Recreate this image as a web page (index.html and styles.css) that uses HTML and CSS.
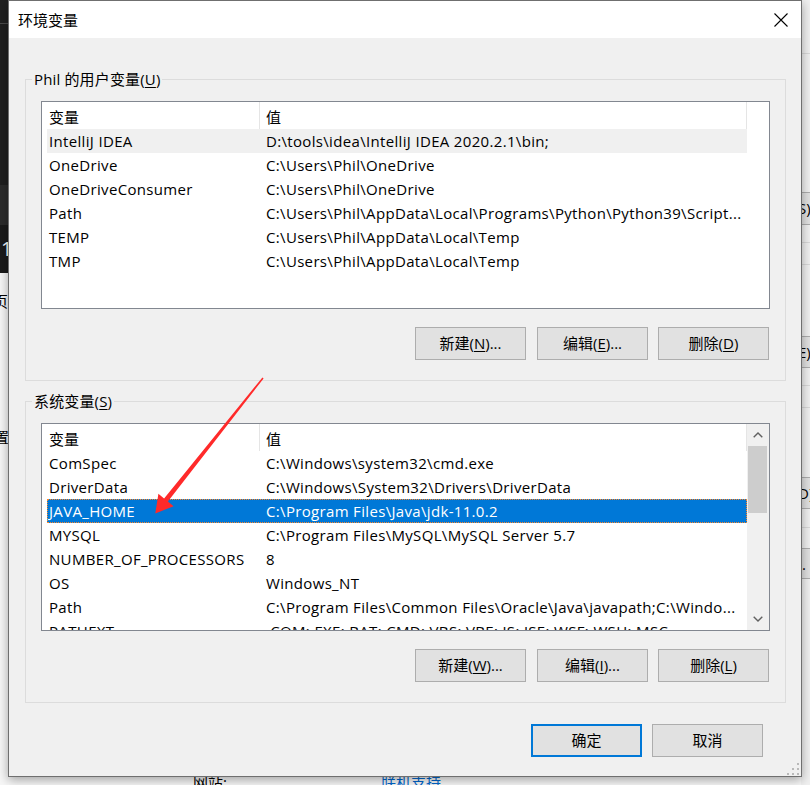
FILE: index.html
```html
<!DOCTYPE html>
<html lang="zh-CN">
<head>
<meta charset="utf-8">
<title>环境变量</title>
<link rel="stylesheet" href="styles.css">
</head>
<body>
<div class="desktop">
  <div class="bg-left">
    <div class="bl-a"></div>
    <div class="bl-line"></div>
    <div class="bl-b"></div>
    <div class="bl-c"></div>
    <div class="bl-d"><span class="bl-digit">1</span></div>
    <div class="bl-e">
      <span class="bl-g1">页</span>
      <span class="bl-g2">置</span>
    </div>
  </div>

  <div class="bg-right">
    <div class="br-line br-l1"></div>
    <div class="br-btn br-b1">S)</div>
    <div class="br-line br-l2"></div>
    <div class="br-line br-l3"></div>
    <div class="br-btn br-b2">E)</div>
    <div class="br-line br-l4"></div>
    <div class="br-line br-l5"></div>
    <div class="br-btn br-b3">D)</div>
    <div class="br-line br-l6"></div>
    <div class="br-btn br-b4">..</div>
  </div>

  <div class="bg-bottom">
    <span class="bb-label">网站:</span>
    <span class="bb-link">联机支持</span>
  </div>

  <div class="dialog">
    <div class="titlebar">
      <span class="title">环境变量</span>
      <svg class="close" width="14" height="14" viewBox="0 0 14 14">
        <path d="M0.5 0.5 L13.5 13.5 M13.5 0.5 L0.5 13.5" stroke="#000" stroke-width="1.1" fill="none"/>
      </svg>
    </div>

    <div class="body">
      <div class="group group-user">
        <div class="group-title">Phil 的用户变量(<u>U</u>)</div>
        <div class="list">
          <div class="table">
            <div class="hdr"><div class="c1">变量</div><div class="c2">值</div></div>
            <div class="row hot"><div class="c1">IntelliJ IDEA</div><div class="c2">D:\tools\idea\IntelliJ IDEA 2020.2.1\bin;</div></div>
            <div class="row"><div class="c1">OneDrive</div><div class="c2">C:\Users\Phil\OneDrive</div></div>
            <div class="row"><div class="c1">OneDriveConsumer</div><div class="c2">C:\Users\Phil\OneDrive</div></div>
            <div class="row"><div class="c1">Path</div><div class="c2">C:\Users\Phil\AppData\Local\Programs\Python\Python39\Script...</div></div>
            <div class="row"><div class="c1">TEMP</div><div class="c2">C:\Users\Phil\AppData\Local\Temp</div></div>
            <div class="row"><div class="c1">TMP</div><div class="c2">C:\Users\Phil\AppData\Local\Temp</div></div>
          </div>
        </div>
        <div class="btns">
          <button class="btn">新建(<u>N</u>)...</button>
          <button class="btn">编辑(<u>E</u>)...</button>
          <button class="btn">删除(<u>D</u>)</button>
        </div>
      </div>

      <div class="group group-sys">
        <div class="group-title">系统变量(<u>S</u>)</div>
        <div class="list">
          <div class="table">
            <div class="hdr"><div class="c1">变量</div><div class="c2">值</div></div>
            <div class="row"><div class="c1">ComSpec</div><div class="c2">C:\Windows\system32\cmd.exe</div></div>
            <div class="row"><div class="c1">DriverData</div><div class="c2">C:\Windows\System32\Drivers\DriverData</div></div>
            <div class="row sel"><div class="c1">JAVA_HOME</div><div class="c2">C:\Program Files\Java\jdk-11.0.2</div></div>
            <div class="row"><div class="c1">MYSQL</div><div class="c2">C:\Program Files\MySQL\MySQL Server 5.7</div></div>
            <div class="row"><div class="c1">NUMBER_OF_PROCESSORS</div><div class="c2">8</div></div>
            <div class="row"><div class="c1">OS</div><div class="c2">Windows_NT</div></div>
            <div class="row"><div class="c1">Path</div><div class="c2">C:\Program Files\Common Files\Oracle\Java\javapath;C:\Windo...</div></div>
            <div class="row"><div class="c1">PATHEXT</div><div class="c2">.COM;.EXE;.BAT;.CMD;.VBS;.VBE;.JS;.JSE;.WSF;.WSH;.MSC</div></div>
          </div>
          <div class="scroll">
            <div class="sb-btn">
              <svg width="10" height="6" viewBox="0 0 10 6"><path d="M0.7 5.3 L5 1 L9.3 5.3" stroke="#606060" stroke-width="1.4" fill="none"/></svg>
            </div>
            <div class="thumb"></div>
            <div class="sb-track"></div>
            <div class="sb-btn">
              <svg width="10" height="6" viewBox="0 0 10 6"><path d="M0.7 0.7 L5 5 L9.3 0.7" stroke="#606060" stroke-width="1.4" fill="none"/></svg>
            </div>
          </div>
        </div>
        <div class="btns">
          <button class="btn">新建(<u>W</u>)...</button>
          <button class="btn">编辑(<u>I</u>)...</button>
          <button class="btn">删除(<u>L</u>)</button>
        </div>
      </div>

      <div class="footer">
        <button class="btn btn-default">确定</button>
        <button class="btn">取消</button>
      </div>
    </div>

    <svg class="grip" width="12" height="12" viewBox="0 0 12 12">
      <rect x="10" y="0" width="2" height="2" fill="#b9b9b9"/>
      <rect x="5" y="5" width="2" height="2" fill="#b9b9b9"/>
      <rect x="10" y="5" width="2" height="2" fill="#b9b9b9"/>
      <rect x="0" y="10" width="2" height="2" fill="#b9b9b9"/>
      <rect x="5" y="10" width="2" height="2" fill="#b9b9b9"/>
      <rect x="10" y="10" width="2" height="2" fill="#b9b9b9"/>
    </svg>
  </div>

  <svg class="arrow" width="810" height="785" viewBox="0 0 810 785">
    <polygon points="263.6,378.5 167.9,501.6 173.6,506.2 155.3,513.4 158.4,493.8 164.1,498.4 262.4,377.5" fill="#ff2a2a"/>
  </svg>
</div>
</body>
</html>
```

FILE: styles.css
```css
* { box-sizing: border-box; }
html, body { margin: 0; padding: 0; }
body {
  width: 810px;
  height: 785px;
  overflow: hidden;
  font-family: "Open Sans", "Noto Sans CJK SC", sans-serif;
  font-size: 15px;
  color: #000;
}
.desktop {
  position: relative;
  width: 810px;
  height: 785px;
  background: #f8f8f8;
  overflow: hidden;
}

/* ---------- background window fragments ---------- */
.bg-left {
  position: absolute;
  left: 0;
  top: 0;
  width: 8px;
  height: 785px;
  display: flex;
  flex-direction: column;
  overflow: hidden;
}
.bl-a { height: 23px; background: #202020; }
.bl-line { height: 1px; background: #4a4a4a; }
.bl-b { height: 161px; background: #1f1f1f; }
.bl-c { height: 40px; background: #2b2b2b; }
.bl-d { height: 48px; background: #1a1a1a; color: #fff; font-size: 20px; line-height: 24px; padding: 12px 0 0 1px; }
.bl-e { flex: 1; background: #f7f7f7; display: flex; flex-direction: column; font-size: 15px; line-height: 20px; }
.bl-g1 { margin: 18px 0 0 -7px; white-space: nowrap; }
.bl-g2 { margin: 116px 0 0 -6px; white-space: nowrap; }

.bg-right {
  position: absolute;
  left: 801px;
  top: 0;
  width: 9px;
  height: 785px;
  background: #f0f0f0;
  overflow: hidden;
}
.br-line { position: absolute; left: 0; width: 9px; height: 1px; background: #d9d9d9; }
.br-btn {
  position: absolute;
  left: 0;
  width: 9px;
  background: #e1e1e1;
  border-top: 1px solid #adadad;
  border-bottom: 1px solid #adadad;
  font-size: 15px;
  line-height: 30px;
  text-indent: -3px;
  white-space: nowrap;
  color: #000;
}
.br-l1 { top: 53px; }
.br-b1 { top: 192px; height: 33px; }
.br-l2 { top: 242px; }
.br-l3 { top: 264px; }
.br-b2 { top: 336px; height: 32px; }
.br-l4 { top: 385px; }
.br-l5 { top: 407px; }
.br-b3 { top: 477px; height: 32px; }
.br-l6 { top: 527px; }
.br-b4 { top: 548px; height: 31px; }

.bg-bottom {
  position: absolute;
  left: 193px;
  top: 772px;
  display: flex;
  gap: 154px;
  line-height: 20px;
  font-size: 15px;
  white-space: nowrap;
}
.bb-link { color: #0066cc; }

/* ---------- dialog ---------- */
.dialog {
  position: absolute;
  left: 8px;
  top: 0;
  width: 794px;
  height: 777px;
  background: #f0f0f0;
  border: 1px solid #6f6f6f;
  box-shadow: 0 3px 10px rgba(0, 0, 0, 0.35);
  display: flex;
  flex-direction: column;
}
.titlebar {
  height: 37px;
  flex: none;
  background: #fff;
  display: flex;
  align-items: center;
  justify-content: space-between;
  padding-left: 9px;
  padding-right: 13px;
}
.title { font-size: 15px; line-height: 20px; padding-top: 1px; }
.close { display: block; }

.body {
  padding: 41px 15px 0 16px;
  display: flex;
  flex-direction: column;
}

.group {
  border: 1px solid #dcdcdc;
  padding: 0 15px 20px 15px;
}
.group-sys { margin-top: 20px; }
.group-title {
  width: fit-content;
  margin: -11px 0 0 -9px;
  padding: 0 2px;
  background: #f0f0f0;
  line-height: 20px;
  height: 20px;
  white-space: nowrap;
  letter-spacing: 0.15px;
}
u { text-underline-offset: 2px; }

.list {
  margin-top: 12px;
  height: 208px;
  border: 1px solid #828790;
  background: #fff;
  display: flex;
  overflow: hidden;
}
.table {
  margin-left: 5px;
  width: 700px;
  flex: none;
}
.hdr {
  display: flex;
  height: 27px;
  line-height: 30px;
}
.hdr .c1 { width: 212px; padding-left: 2px; }
.hdr .c2 {
  width: 488px;
  padding-left: 6px;
  border-left: 1px solid #e5e5e5;
  border-right: 1px solid #e5e5e5;
}
.row {
  display: flex;
  height: 24px;
  line-height: 24px;
  white-space: nowrap;
  letter-spacing: 0.33px;
}
.row .c1 { width: 212px; padding-left: 2px; overflow: hidden; }
.row .c2 { width: 488px; padding-left: 7px; overflow: hidden; }
.row.hot { background: #f0f0f0; }
.row.sel {
  background: #0078d7;
  color: #fff;
  outline: 1px dotted #ff8728;
  outline-offset: -1px;
}

.scroll {
  width: 22px;
  flex: none;
  background: #f0f0f0;
  display: flex;
  flex-direction: column;
}
.sb-btn {
  height: 22px;
  flex: none;
  display: flex;
  align-items: center;
  justify-content: center;
}
.sb-btn svg { display: block; }
.thumb {
  height: 67px;
  flex: none;
  margin: 0 2px 0 1px;
  background: #cdcdcd;
}
.sb-track { flex: 1; }

.btns {
  margin-top: 18px;
  display: flex;
  justify-content: flex-end;
  gap: 10px;
  padding-right: 1px;
}
.btns .btn:first-child { margin-right: 1px; }
.btn {
  width: 111px;
  height: 33px;
  padding: 0;
  border: 1px solid #adadad;
  background: #e1e1e1;
  font-family: inherit;
  font-size: 15px;
  line-height: 31px;
  color: #000;
  text-align: center;
  border-radius: 0;
}
.btn-default { border: 2px solid #0078d7; line-height: 29px; }

.footer {
  margin-top: 21px;
  display: flex;
  justify-content: flex-end;
  gap: 10px;
  padding-right: 23px;
}

.grip {
  position: absolute;
  right: 2px;
  bottom: 1px;
  display: block;
}

.arrow {
  position: absolute;
  left: 0;
  top: 0;
  pointer-events: none;
}
```
